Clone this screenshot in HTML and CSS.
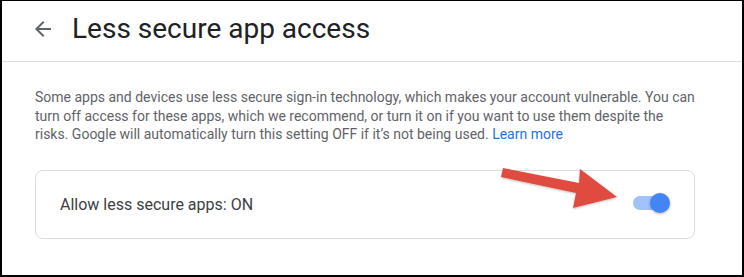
FILE: index.html
```html
<!DOCTYPE html>
<html lang="en">
<head>
    <meta charset="UTF-8" />
    <title>Less secure app access</title>
    <link rel="stylesheet" href="styles.css">
</head>
<body>
    <div class="frame">
        <div class="header">
            <svg class="back" viewBox="0 0 24 24" width="24" height="24">
                <path d="M20 11H7.83l5.59-5.59L12 4l-8 8 8 8 1.41-1.41L7.83 13H20v-2z" fill="#5f6368"/>
            </svg>
            <h1>Less secure app access</h1>
        </div>
        <div class="content">
            <p class="info">
                Some apps and devices use less secure sign-in technology, which makes your account vulnerable. You can
                turn off access for these apps, which we recommend, or turn it on if you want to use them despite the
                risks. Google will automatically turn this setting OFF if it’s not being used. <a href="#">Learn more</a>
            </p>
            <div class="card">
                <span class="card-label">Allow less secure apps: ON</span>
                <div class="switch">
                    <div class="track"></div>
                    <div class="knob"></div>
                </div>
            </div>
        </div>
        <!-- annotation arrow -->
        <svg class="pointer" width="744" height="277" viewBox="0 0 744 277">
            <defs>
                <filter id="soft" x="-10%" y="-10%" width="120%" height="130%">
                    <feDropShadow dx="0" dy="1" stdDeviation="0.8" flood-color="#000" flood-opacity="0.25"/>
                </filter>
            </defs>
            <polygon points="503,168 579,183 580,169 617,197 573,208 576,193 501,177" fill="#e04c41" filter="url(#soft)"/>
        </svg>
    </div>
</body>
</html>
```

FILE: styles.css
```css
body {
    margin: 0;
    font-family: Roboto, "Liberation Sans", sans-serif;
    background-color: #ffffff;
}

.frame {
    position: relative;
    width: 744px;
    height: 277px;
    box-sizing: border-box;
    border-top: 1px solid #000;
    border-left: 2px solid #000;
    border-right: 2px solid #000;
    border-bottom: 2px solid #000;
    overflow: hidden;
}

.header {
    height: 60px;
    display: flex;
    align-items: center;
    padding-left: 29px;
    border-bottom: 1px solid #dadce0;
}

.back {
    margin-top: -4px;
}

h1 {
    margin: 0 0 0 17px;
    font-size: 28px;
    font-weight: 400;
    color: #202124;
    margin-top: -6px;
}

.content {
    padding: 0 33px;
}

.info {
    margin: 26px 0 0 0;
    font-size: 14px;
    line-height: 18.5px;
    color: #5f6368;
    width: 661px;
}

.info a {
    color: #1a73e8;
    text-decoration: none;
}

.card {
    margin-top: 26px;
    width: 660px;
    height: 69px;
    box-sizing: border-box;
    border: 1px solid #dadce0;
    border-radius: 8px;
    display: flex;
    align-items: center;
    justify-content: space-between;
    padding: 0 24px 0 24px;
}

.card-label {
    font-size: 16px;
    color: #3c4043;
}

.switch {
    position: relative;
    width: 37px;
    height: 20px;
    margin-top: -2px;
}

.track {
    position: absolute;
    left: 0;
    top: 3px;
    width: 35px;
    height: 14px;
    border-radius: 7px;
    background-color: #a1c2fa;
}

.knob {
    position: absolute;
    right: 0;
    top: 0;
    width: 20px;
    height: 20px;
    border-radius: 50%;
    background-color: #4285f4;
    box-shadow: 0 1px 3px rgba(0, 0, 0, 0.3);
}

.pointer {
    position: absolute;
    left: -2px;
    top: -1px;
}
```
